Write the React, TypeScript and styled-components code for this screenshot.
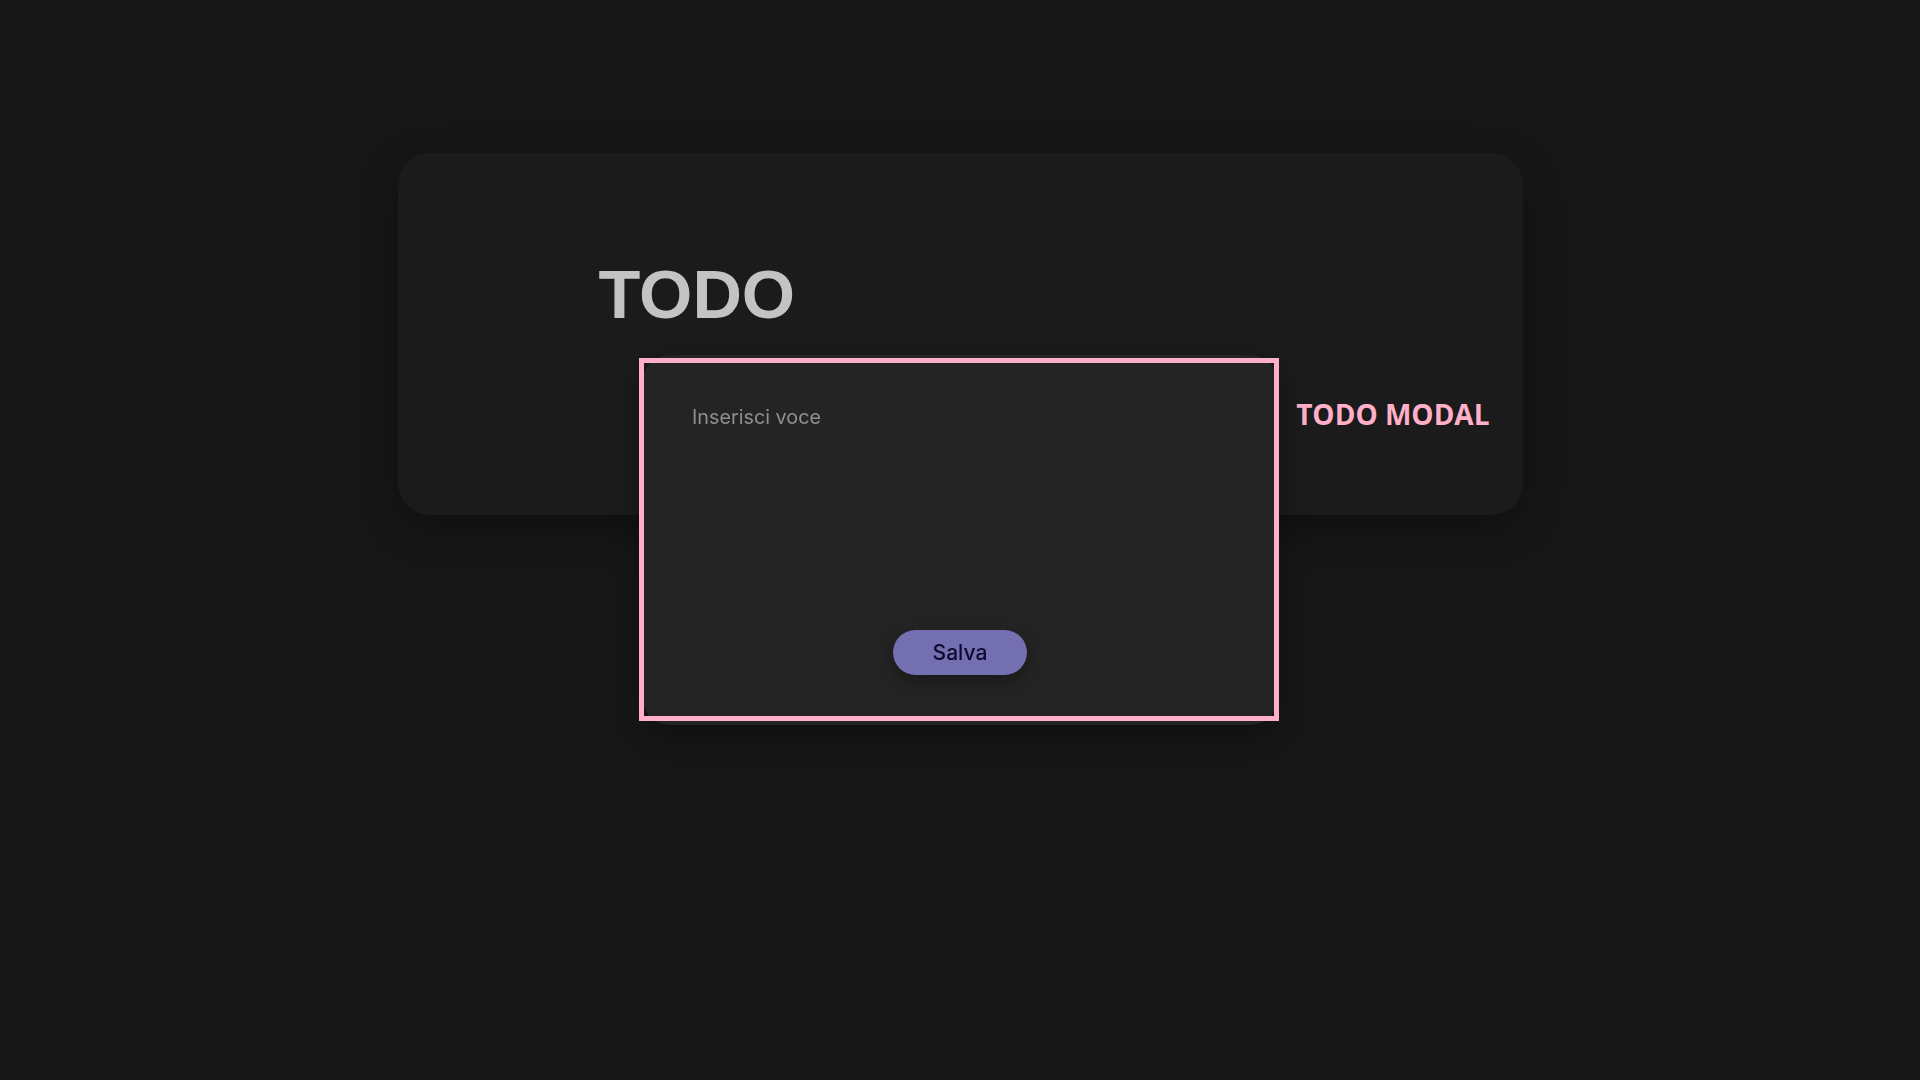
import React from "react";
import styled, { createGlobalStyle } from "styled-components";

const GlobalStyle = createGlobalStyle`
  html, body {
    margin: 0;
    padding: 0;
    background: #171717;
    min-height: 100vh;
  }
  body {
    font-family: Inter, "Noto Sans", sans-serif;
  }
`;

const Page = styled.main`
  display: flex;
  justify-content: center;
  align-items: flex-start;
  padding-top: 153px;
  min-height: 100vh;
  box-sizing: border-box;
`;

const Card = styled.section`
  width: 1125px;
  box-sizing: border-box;
  background: #1b1b1b;
  border-radius: 32px;
  box-shadow: 0 12px 40px rgba(0, 0, 0, 0.35);
  padding: 102px 33px 82px 201px;
  display: flex;
  flex-direction: column;
  gap: 60px;
`;

const Title = styled.h1`
  margin: 0;
  font-family: "Liberation Sans", Arial, sans-serif;
  font-weight: 700;
  font-size: 68.5px;
  line-height: 80px;
  color: #c3c3c3;
`;

const Row = styled.div`
  display: flex;
  justify-content: flex-end;
`;

const ModalLabel = styled.h2`
  margin: 0;
  font-family: "Open Sans", "Noto Sans", sans-serif;
  font-weight: 700;
  font-size: 28px;
  line-height: 38px;
  color: #ffafc8;
`;

const Dialog = styled.div`
  position: fixed;
  top: 355px;
  left: 642px;
  width: 636px;
  height: 370px;
  box-sizing: border-box;
  background: #242424;
  border-radius: 28px;
  box-shadow: 0 10px 30px rgba(0, 0, 0, 0.35);
  padding: 50px 50px 50px 50px;
  display: flex;
  flex-direction: column;
  align-items: stretch;

  &::after {
    content: "";
    position: absolute;
    top: 3px;
    bottom: 4px;
    left: -3px;
    right: -1px;
    border: 5px solid #ffafc8;
    pointer-events: none;
  }
`;

const TextArea = styled.textarea`
  flex: 1;
  background: transparent;
  border: none;
  outline: none;
  resize: none;
  padding: 0;
  margin: 0;
  font-family: Inter, sans-serif;
  font-size: 19.8px;
  line-height: 24px;
  color: #d0d0d0;

  &::placeholder {
    color: #8f8f8f;
  }
`;

const SaveButton = styled.button`
  align-self: center;
  width: 134px;
  height: 45px;
  border: none;
  border-radius: 23px;
  background: #736fb1;
  color: #0b0a2e;
  font-family: Inter, sans-serif;
  font-weight: 500;
  font-size: 21px;
  box-shadow: 0 6px 18px rgba(0, 0, 0, 0.35);
  cursor: pointer;
`;

export default function App() {
  return (
    <>
      <GlobalStyle />
      <Page>
        <Card>
          <Title>TODO</Title>
          <Row>
            <ModalLabel>TODO MODAL</ModalLabel>
          </Row>
        </Card>
      </Page>
      <Dialog role="dialog">
        <TextArea placeholder="Inserisci voce" />
        <SaveButton>Salva</SaveButton>
      </Dialog>
    </>
  );
}
